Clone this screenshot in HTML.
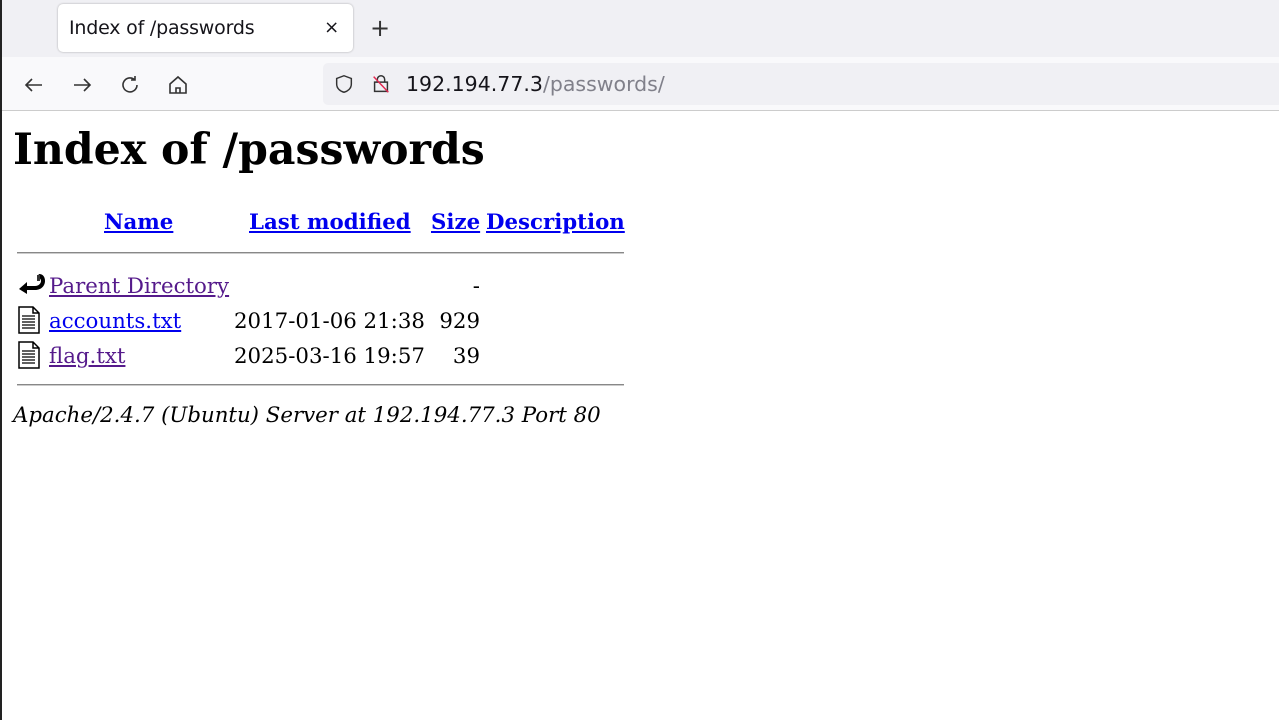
<!DOCTYPE html>
<html><head><meta charset="utf-8"><style>
*{margin:0;padding:0;box-sizing:border-box}
body{width:1279px;height:720px;overflow:hidden;background:#fff;position:relative;font-family:"DejaVu Serif","Liberation Serif",serif;}
.lb{position:absolute;left:0;top:0;width:2px;height:720px;background:#222}
.tabbar{position:absolute;left:2px;top:0;width:1277px;height:57px;background:#f0f0f4}
.tab{position:absolute;left:56px;top:4px;width:295px;height:48px;background:#fff;border-radius:5px;box-shadow:0 0 2px rgba(0,0,0,.3);font:19px "DejaVu Sans",sans-serif;color:#15141a;padding:13px 0 0 11px;letter-spacing:-0.2px}
.tab .x{position:absolute;right:14px;top:13px;font-size:18px}
.plus{position:absolute;left:368px;top:14px;font:24px "DejaVu Sans",sans-serif;color:#333}
.tool{position:absolute;left:2px;top:57px;width:1277px;height:54px;background:#f9f9fb;border-bottom:1px solid #ccc}
.url{position:absolute;left:321px;top:6px;width:960px;height:42px;background:#f0f0f4;border-radius:5px}
.urltxt{position:absolute;left:406px;top:72px;font:20.5px "DejaVu Sans",sans-serif;color:#15141a}
.urltxt span{color:#80808a}
.c{position:absolute}
a{color:#0000ee}
a.v{color:#551a8b}
h1{position:absolute;left:13px;top:125px;font-size:42.6px;font-weight:bold;white-space:nowrap}
.t{position:absolute;font-size:21.3px;white-space:nowrap}
.r{text-align:right}
.hr{position:absolute;left:17px;width:607px;height:2px;background:#888;border-bottom:1px solid #ccc}
</style></head><body>
<div class="lb"></div>
<div class="tabbar">
<div class="tab">Index of /passwords<span class="x">×</span></div>
<div class="plus">+</div>
</div>
<div class="tool">
<svg class="c" style="left:20px;top:16px" width="24" height="24" viewBox="0 0 24 24" fill="none" stroke="#333" stroke-width="1.6"><path d="M20 12H4M10 6l-6 6 6 6"/></svg>
<svg class="c" style="left:68px;top:16px" width="24" height="24" viewBox="0 0 24 24" fill="none" stroke="#333" stroke-width="1.6"><path d="M4 12h16M14 6l6 6-6 6"/></svg>
<svg class="c" style="left:116px;top:16px" width="24" height="24" viewBox="0 0 24 24" fill="none" stroke="#333" stroke-width="1.6"><path d="M19 12a7 7 0 1 1-2-5M17 3v4h-4"/></svg>
<svg class="c" style="left:164px;top:16px" width="24" height="24" viewBox="0 0 24 24" fill="none" stroke="#333" stroke-width="1.6"><path d="M4 11l8-7 8 7v9H4zM10 20v-5h4v5"/></svg>
<div class="url">
<svg class="c" style="left:10px;top:10px" width="22" height="22" viewBox="0 0 24 24" fill="none" stroke="#333" stroke-width="1.6"><path d="M12 3l8 3v6c0 5-4 8-8 9-4-1-8-4-8-9V6z"/></svg>
<svg class="c" style="left:47px;top:10px" width="22" height="22" viewBox="0 0 24 24" fill="none" stroke-width="1.6"><path stroke="#333" d="M8 10V7a4 4 0 0 1 8 0v3M5 10h14v10H5z"/><path stroke="#e22850" d="M4 4l16 17"/></svg>
</div>
</div>
<div class="urltxt">192.194.77.3<span>/passwords/</span></div>
<h1>Index of /passwords</h1>
<div class="t" style="left:104px;top:210px;font-weight:bold"><a href="#">Name</a></div>
<div class="t" style="left:249px;top:210px;font-weight:bold"><a href="#">Last modified</a></div>
<div class="t" style="left:431px;top:210px;font-weight:bold"><a href="#">Size</a></div>
<div class="t" style="left:486px;top:210px;font-weight:bold"><a href="#">Description</a></div>
<div class="hr" style="top:252px"></div>
<svg class="c" style="left:17px;top:272px" width="28" height="26" viewBox="0 0 28 26"><path d="M2 17l8-7v4h8c4 0 6-3 6-5s-2-4-4-4l2-3c4 0 6 3 6 7s-3 9-10 9h-8v4z" fill="#000"/><path d="M20 3l3 0 0 6-3 0z" fill="#333"/></svg>
<div class="t" style="left:49px;top:274px"><a class="v" href="#">Parent Directory</a></div>
<div class="t r" style="left:380px;width:100px;top:274px">-</div>
<svg class="c" style="left:17px;top:306px" width="24" height="28" viewBox="0 0 24 28" fill="none" stroke="#000" stroke-width="1.5"><path d="M2 1h14l6 6v20H2z M16 1v6h6"/><path d="M5 10h13M5 13h13M5 16h13M5 19h13M5 22h13" stroke-width="1.3"/></svg>
<div class="t" style="left:49px;top:309px"><a href="#">accounts.txt</a></div>
<div class="t" style="left:234px;top:309px">2017-01-06 21:38</div>
<div class="t r" style="left:380px;width:100px;top:309px">929</div>
<svg class="c" style="left:17px;top:341px" width="24" height="28" viewBox="0 0 24 28" fill="none" stroke="#000" stroke-width="1.5"><path d="M2 1h14l6 6v20H2z M16 1v6h6"/><path d="M5 10h13M5 13h13M5 16h13M5 19h13M5 22h13" stroke-width="1.3"/></svg>
<div class="t" style="left:49px;top:344px"><a class="v" href="#">flag.txt</a></div>
<div class="t" style="left:234px;top:344px">2025-03-16 19:57</div>
<div class="t r" style="left:380px;width:100px;top:344px">39</div>
<div class="hr" style="top:384px"></div>
<div class="t" style="left:13px;top:403px;font-style:italic">Apache/2.4.7 (Ubuntu) Server at 192.194.77.3 Port 80</div>
</body></html>
